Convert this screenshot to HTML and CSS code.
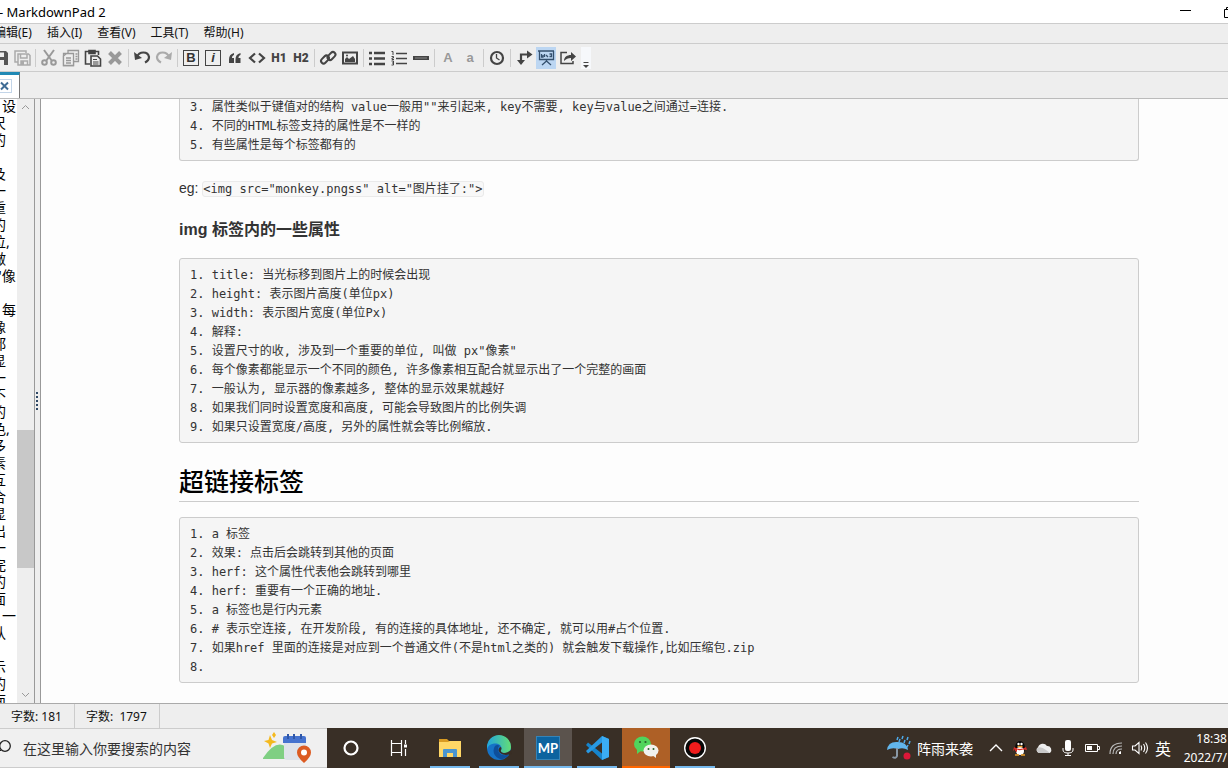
FILE: index.html
```html
<!DOCTYPE html>
<html lang="zh-CN">
<head>
<meta charset="utf-8">
<title>MarkdownPad 2</title>
<link rel="stylesheet" href="styles.css">
</head>
<body>
<div class="window">
  <header class="titlebar">
    <span class="title">- MarkdownPad 2</span>
    <button class="winbtn" aria-label="最小化"><svg width="12" height="12"><path d="M0 4.500H11" stroke="#000"/></svg></button>
    <button class="winbtn max" aria-label="最大化"><svg width="12" height="12"><path d="M.5 3.5H8.500V11.500H.5ZM2.500 3V1.500H10.500V9.500H9" fill="none" stroke="#000"/></svg></button>
  </header>
  <nav class="menu">
    <button>编辑(E)</button><button>插入(I)</button><button>查看(V)</button><button>工具(T)</button><button>帮助(H)</button>
  </nav>
  <div class="toolbar">
    <button aria-label="保存"><svg viewBox="0 0 22 22"><path fill="#555" fill-rule="evenodd" d="M3 4H17L19 6V18H3ZM6 5.500V10H15V5.500ZM7 13V18H15V13Z"/></svg></button>
    <button aria-label="全部保存"><svg viewBox="0 0 22 22"><g fill="none" stroke="#aaa" stroke-width="1.500"><path d="M6.500 15H4V4H15V6M7 7H17.500L19 8.500V18H7ZM9.500 7.500V11H16V7.500M10 18V14H16.500V18"/></g><path d="M10 14h3v4h-3z" fill="#aaa"/></svg></button>
    <i></i>
    <button aria-label="剪切"><svg viewBox="0 0 22 22"><g fill="none" stroke="#999" stroke-width="2"><path d="M6 3L14 14M16 3L8 14"/><circle cx="6.500" cy="15.500" r="2.300"/><circle cx="15.500" cy="15.500" r="2.300"/></g></svg></button>
    <button aria-label="复制"><svg viewBox="0 0 22 22"><g fill="#eee" stroke="#999" stroke-width="1.300"><path d="M8 3.500H18.500V14.500H8ZM6 6.500H3.500V18.500H13.500V15"/><path d="M3.500 9L6.500 6.500H13.500V18.500H3.500ZM6 11h5M6 13.500h5M6 16h5M15.500 7h2M15.500 9.500h2M15.500 12h2"/></g></svg></button>
    <button aria-label="粘贴"><svg viewBox="0 0 22 22"><g fill="none" stroke="#444" stroke-width="1.600"><path d="M8 17H3.500V4.500H16.500V8"/><path d="M7 3.500H13V6.500H7Z" fill="#444"/><path d="M9 9H15.500L18.500 12V19H9Z" fill="#eee"/><path d="M11 12.500h4M11 15h5.500M11 17h5.500" stroke-width="1"/></g></svg></button>
    <button aria-label="删除"><svg viewBox="0 0 22 22"><path d="M5.500 5.500L16.500 16.500M16.500 5.500L5.500 16.500" stroke="#999" stroke-width="4"/></svg></button>
    <i></i>
    <button aria-label="撤销"><svg viewBox="0 0 22 22"><path d="M6 10C8 4 17 4 18 10C18 13 16 14.500 14 15.500" fill="none" stroke="#444" stroke-width="2.200"/><path d="M3 5L4 13L11 11Z" fill="#444"/></svg></button>
    <button aria-label="重做"><svg viewBox="0 0 22 22"><path d="M16 10C14 4 5 4 4 10C4 13 6 14.500 8 15.500" fill="none" stroke="#aaa" stroke-width="2.200"/><path d="M19 5L18 13L11 11Z" fill="#aaa"/></svg></button>
    <i></i>
    <button class="boxed" aria-label="粗体"><b>B</b></button>
    <button class="boxed it" aria-label="斜体"><b>i</b></button>
    <button aria-label="引用"><svg viewBox="0 0 22 22"><g fill="#444"><path d="M10 6C6.500 7 5 9 5 12.500V16H10V11H8C8 9.500 8.500 8.500 10 8Z"/><path d="M16.500 6C13 7 11.500 9 11.500 12.500V16H16.500V11H14.500C14.500 9.500 15 8.500 16.500 8Z"/></g></svg></button>
    <button aria-label="代码"><svg viewBox="0 0 22 22"><path d="M9 6.500L4 11L9 15.500M13 6.500L18 11L13 15.500" fill="none" stroke="#444" stroke-width="2.200"/></svg></button>
    <button class="h">H1</button>
    <button class="h">H2</button>
    <i></i>
    <button aria-label="链接"><svg viewBox="0 0 22 22"><g fill="none" stroke="#444" stroke-width="2"><rect x="3.500" y="10" width="9" height="5" rx="2.500" transform="rotate(-45 8 12.500)"/><rect x="10" y="6.500" width="9" height="5" rx="2.500" transform="rotate(-45 14.500 9)"/></g></svg></button>
    <button aria-label="图片"><svg viewBox="0 0 22 22"><path d="M4 5.500H18V16.500H4Z" fill="none" stroke="#444" stroke-width="2"/><path d="M6 15V12L8 10L10 12L14 9L16 12V15Z" fill="#444"/><circle cx="8" cy="8.500" r="1" fill="#444"/></svg></button>
    <i></i>
    <button aria-label="无序列表"><svg viewBox="0 0 22 22"><path d="M3 6h3M3 11.500h3M3 17h3M8 6h11M8 11.500h11M8 17h11" stroke="#444" stroke-width="2.400"/></svg></button>
    <button aria-label="有序列表"><svg viewBox="0 0 22 22"><path d="M8 6.500h11M8 11.500h11M8 16.500h11" stroke="#444" stroke-width="1.400"/><path d="M3.500 4.500H5V8M3.500 9.500H5.500V11H4V12.500H6M3.500 14H5.500V18H3.500M4 16H5.500" fill="none" stroke="#444"/></svg></button>
    <button aria-label="分隔线"><svg viewBox="0 0 22 22"><path d="M3 9H19V13H3Z" fill="#444"/><path d="M5 11h12" stroke="#888"/></svg></button>
    <i></i>
    <button class="l">A</button>
    <button class="l">a</button>
    <i></i>
    <button aria-label="时间"><svg viewBox="0 0 22 22"><circle cx="11" cy="11" r="6" fill="none" stroke="#444" stroke-width="2.200"/><path d="M10.500 7V11L13.500 13" fill="none" stroke="#444" stroke-width="1.300"/></svg></button>
    <i></i>
    <button aria-label="切换"><svg viewBox="0 0 22 22"><path d="M8 14V7.500H15" fill="none" stroke="#444" stroke-width="2.200"/><path d="M4 13H12L8 18ZM14 3.500L19.500 7.500L14 11.500Z" fill="#444"/></svg></button>
    <button class="on" aria-label="预览"><svg viewBox="0 0 22 22"><g fill="none" stroke="#34506e" stroke-width="1.300"><path d="M3 4H19M4.500 4V12.500H18.500V4M11.500 12.500V15M11.500 14L7 18M11.500 14L16 18M6.500 7V10H8V8M9.500 7V10M11 8L13 10M14.500 7H16.500V9.500H14.500"/></g></svg></button>
    <button aria-label="导出"><svg viewBox="0 0 22 22"><path d="M10 5.500H4V16.500H16V14" fill="none" stroke="#444" stroke-width="1.500"/><path d="M7 14C7 10 10 8 14 8V5L19 9.500L14 14V11C11 11 9 12 7 14Z" fill="#444"/></svg></button>
    <button class="more" aria-label="更多"><svg viewBox="0 0 8 22"><path d="M1.500 15.500H6.500" stroke="#444"/><path d="M1 18H7L4 21Z" fill="#444"/></svg></button>
  </div>
  <div class="tabs"><div class="tab"><button aria-label="关闭"><svg width="11" height="13"><path d="M1 2.500L8 9.500M8 2.500L1 9.500" stroke="#3f6c94" stroke-width="2"/></svg></button></div></div>
  <main class="work">
    <div class="editor">
      <div class="source">
        <p class="in">设</p><p>尺</p><p>的</p><p></p><p>及</p><p>一</p><p>重</p><p>的</p><p>位,</p><p>做</p><p class="in quote">"像</p><p></p><p class="in">每</p><p>像</p><p>都</p><p>显</p><p>一</p><p>不</p><p>的</p><p>色,</p><p>多</p><p>素</p><p>互</p><p>合</p><p>显</p><p>出</p><p>一</p><p>完</p><p>的</p><p>面</p><p class="in">一</p><p>认</p><p></p><p>示</p><p>的</p><p>面</p>
      </div>
      <div class="scroll">
        <svg width="9" height="16"><path d="M1 10L4.500 6.500L8 10" fill="none" stroke="#999"/></svg>
        <div class="track"><div class="thumb"></div></div>
        <svg width="9" height="16"><path d="M1 6L4.500 9.500L8 6" fill="none" stroke="#999"/></svg>
      </div>
    </div>
    <div class="splitter"><span></span></div>
    <article class="preview">
<pre class="first">3. 属性类似于键值对的结构 value一般用""来引起来, key不需要, key与value之间通过=连接.
4. 不同的HTML标签支持的属性是不一样的
5. 有些属性是每个标签都有的</pre>
      <p class="eg">eg: <code>&lt;img src="monkey.pngss" alt="图片挂了:"&gt;</code></p>
      <h3>img 标签内的一些属性</h3>
<pre>1. title: 当光标移到图片上的时候会出现
2. height: 表示图片高度(单位px)
3. width: 表示图片宽度(单位Px)
4. 解释:
5. 设置尺寸的收, 涉及到一个重要的单位, 叫做 px"像素"
6. 每个像素都能显示一个不同的颜色, 许多像素相互配合就显示出了一个完整的画面
7. 一般认为, 显示器的像素越多, 整体的显示效果就越好
8. 如果我们同时设置宽度和高度, 可能会导致图片的比例失调
9. 如果只设置宽度/高度, 另外的属性就会等比例缩放.</pre>
      <h1>超链接标签</h1>
<pre>1. a 标签
2. 效果: 点击后会跳转到其他的页面
3. herf: 这个属性代表他会跳转到哪里
4. herf: 重要有一个正确的地址.
5. a 标签也是行内元素
6. # 表示空连接, 在开发阶段, 有的连接的具体地址, 还不确定, 就可以用#占个位置.
7. 如果href 里面的连接是对应到一个普通文件(不是html之类的) 就会触发下载操作,比如压缩包.zip
8. </pre>
    </article>
  </main>
  <footer class="status"><span>字数: 181</span><span>字数: &nbsp;1797</span></footer>
  <div class="taskbar">
    <label class="search">
      <svg width="12" height="18"><circle cx="5" cy="7" r="5.300" fill="none" stroke="#222" stroke-width="1.300"/><path d="M1 11L-3 15" stroke="#222"/></svg>
      <input type="text" placeholder="在这里输入你要搜索的内容" aria-label="搜索">
      <svg width="50" height="32" viewBox="0 0 50 32"><path d="M0 26Q12 8 22 14V27H0Z" fill="#7fcf83"/><path d="M7 6L9 11L14 13L9 14.500L7 19L5.500 14.500L1 12L5.500 11Z" transform="translate(0 -3)" fill="#f4b91e"/><path d="M11 0l2 3-2 3-2-3z" fill="#f4b91e"/><path d="M21 6H43V28H24Q21 28 21 25Z" fill="#dfe3ea"/><path d="M20 11V6Q20 4 22 4H41Q43 4 43 6V11Z" fill="#4673cf"/><path d="M25 2v5M31 2v5M38 2v5" stroke="#2f57a8" stroke-width="2"/><path d="M41 31Q34 25 34 20.500A7 7 0 0 1 48 20.500Q48 25 41 31Z" fill="#dc5b22"/><circle cx="41" cy="20.500" r="3" fill="#fff"/></svg>
    </label>
    <button aria-label="Cortana"><svg viewBox="0 0 24 24"><circle cx="12" cy="12" r="6.500" fill="none" stroke="#fff" stroke-width="2.200"/></svg></button>
    <button aria-label="任务视图"><svg viewBox="0 0 24 24"><path d="M4.500 4V7.500H14.500V4M4.500 20V16.500H14.500V20M4.500 7.500V16.500M14.500 7.500V16.500M18.500 4V8M18.500 13V20" fill="none" stroke="#fff" stroke-width="1.200"/><path d="M17 8.500h3v3h-3z" fill="#fff"/></svg></button>
    <div class="apps">
      <button class="run" aria-label="文件资源管理器"><svg viewBox="0 0 24 24"><path d="M1 3H9L11 5H23V21H1Z" fill="#d99b22"/><path d="M1 6H10L12 5H23V21H1Z" fill="#ffd766"/><path d="M5 21V14Q5 13 6 13H18Q19 13 19 14V21H15V17H9V21Z" fill="#4a95cf"/></svg></button>
      <button class="run" aria-label="Edge"><svg viewBox="0 0 24 24"><defs><linearGradient id="e"><stop stop-color="#21a5dd"/><stop offset="1" stop-color="#63dd76"/></linearGradient></defs><circle cx="12" cy="12" r="12" fill="#1673c7"/><path d="M0 11A12 12 0 0 1 24 11C24 15 21 17 17 17C14 17 13 15 14.500 13C15 9 11 7 7 7.500C3 8 1 10 0 13Z" fill="url(#e)"/><path d="M7 12C5 18 10 23 15 23.500C19 22 21 20 22 18C16 21 11 18 11 13C11 11 12 10 13 10C10 8 8 9 7 12Z" fill="#0e4f9b"/><path d="M14.500 13C13 15 14 17 17 17C20 17 22 16 23.500 14L25 18L22 18.500C16 20 12 17 11.500 14Q12 11 14 11Z" fill="#392d23"/></svg></button>
      <button class="run active" aria-label="MarkdownPad"><span class="mp">MP</span></button>
      <button class="run" aria-label="VS Code"><svg viewBox="0 0 24 24"><path d="M17 0L24 3V21L17 24L1 9L3 6.500L17 17.500Z" fill="#1684cc"/><path d="M17 0V6.500L3 17.500L1 15Z" fill="#2899e3"/><path d="M17 0L24 3V21L17 24Z" fill="#3badf4"/></svg></button>
      <button class="run alert" aria-label="微信"><svg viewBox="0 0 24 24"><ellipse cx="8.500" cy="9" rx="8.500" ry="7.500" fill="#50d45c"/><path d="M3 14L3 19L8 15Z" fill="#50d45c"/><ellipse cx="17" cy="15.500" rx="7.500" ry="6" fill="#f1f1ee"/><path d="M18 20L22 23L22 18Z" fill="#f1f1ee"/><g fill="#28612c"><circle cx="6" cy="7" r="1.100"/><circle cx="11.500" cy="7" r="1.100"/><circle cx="14.500" cy="14" r="1"/><circle cx="19.500" cy="14" r="1"/></g></svg></button>
      <button class="run" aria-label="录制"><svg viewBox="0 0 24 24"><circle cx="12" cy="12" r="10.300" fill="#080808" stroke="#fff" stroke-width="1.400"/><circle cx="12" cy="12" r="6" fill="#f01c1c"/></svg></button>
    </div>
    <div class="tray">
      <button class="weather"><svg width="26" height="26" viewBox="0 0 26 26"><path d="M12 2l-1 3M17 1l-1 3M22 2l-1 3M19 5l-1 3M24 6l-1 3M14 4l-1 3M22 10l-1 2" stroke="#4eabeb" stroke-width="1.500"/><path d="M1 15Q2 6 12 7Q21 7 22 15Q17 12 12 14Q6 12 1 15Z" fill="#62b6ec"/><path d="M11 13V21Q10 24 6.500 22" fill="none" stroke="#8998a5" stroke-width="2"/><circle cx="21" cy="21" r="3.500" fill="#dc1738"/></svg>阵雨来袭</button>
      <button aria-label="显示隐藏的图标"><svg viewBox="0 0 16 16"><path d="M2 11L8 5L14 11" fill="none" stroke="#fff" stroke-width="1.400"/></svg></button>
      <button aria-label="QQ"><svg viewBox="0 0 16 16"><ellipse cx="8" cy="8" rx="5" ry="7" fill="#080808"/><ellipse cx="8" cy="11" rx="4" ry="4" fill="#fff"/><path d="M2 7Q8 11 14 7L15 10L11 9.500Q7 11 5 9.500L5 12L3 11V9L1 11Z" fill="#d92d26"/><circle cx="6.500" cy="4" r="1.200" fill="#fff"/><circle cx="9.500" cy="4" r="1.200" fill="#fff"/><path d="M5.500 6.500h5M3 15h4M9 15h4" stroke="#eea12a" stroke-width="1.500"/></svg></button>
      <button aria-label="OneDrive"><svg viewBox="0 0 16 16"><path d="M3 13A3 3 0 0 1 2 7.500A5 5 0 0 1 11 6A4 4 0 0 1 14 13Z" fill="#eee"/><path d="M1 8Q5 6 10 10L14 13H3Q0 12 1 8Z" fill="#c9c9c9"/></svg></button>
      <button aria-label="麦克风"><svg viewBox="0 0 16 16"><rect x="5" y="0" width="6" height="11" rx="2" fill="#fff"/><path d="M3 8V10Q3 13 8 13Q13 13 13 10V8M8 13V15.500M5 15.500H11" fill="none" stroke="#fff"/></svg></button>
      <button aria-label="电池"><svg viewBox="0 0 16 16"><path d="M1.500 4.500H13.500V11.500H1.500ZM14 6.500H15.500V9.500H14" fill="none" stroke="#fff"/><path d="M3 6h5v4H3z" fill="#fff"/></svg></button>
      <button aria-label="网络"><svg viewBox="0 0 16 16"><g fill="none" stroke="#bbb" stroke-width="1.200"><path d="M2 14Q2 3 14 3M5 14Q5 6 14 6M8 14Q8 9 14 9"/></g><path d="M11 14V12L13 11V14Z" fill="#fff"/></svg></button>
      <button aria-label="音量"><svg viewBox="0 0 16 16"><path d="M.5 6H3L7 2.500V13.500L3 10H.5ZM9 5.500Q10.500 8 9 10.500M11.500 4Q14 8 11.500 12M13.500 2.500Q17.500 8 13.500 13.500" fill="none" stroke="#fff" stroke-width="1.100"/></svg></button>
      <button class="ime">英</button>
      <div class="clock"><span>18:38</span><span>2022/7/</span></div>
    </div>
  </div>
</div>
</body>
</html>
```
FILE: styles.css
```css
* { box-sizing: border-box; }
body { margin: 0; font: 12px/16px "Noto Sans", "Noto Sans CJK SC", sans-serif; color: #111; background: #eee; }
button { border: 0; padding: 0; margin: 0; background: none; font: inherit; color: inherit; }
svg { display: block; flex: none; overflow: visible; }
.window { height: 100vh; display: flex; flex-direction: column; overflow: hidden; }

.titlebar { flex: none; height: 24px; display: flex; align-items: center; background: #fff; border-bottom: 1px solid #ccc; overflow: hidden; }
.title { flex: 1; white-space: pre; margin-left: -1px; font-size: 13px; line-height: 22px; color: #000; }
.winbtn { width: 44px; flex: none; }
.winbtn.max { width: 4px; }
.menu { flex: none; height: 20px; display: flex; align-items: center; gap: 15px; padding-bottom: 1px; margin-left: -6px; border-bottom: 1px solid #ccc; }

.toolbar { flex: none; height: 28px; display: flex; align-items: center; margin-left: -11px; border-bottom: 1px solid #ccc; }
.toolbar button { width: 22px; height: 22px; flex: none; display: flex; align-items: center; justify-content: center; }
.toolbar svg { width: 22px; height: 22px; }
.toolbar i { width: 1px; height: 18px; margin: 0 2px; background: #ccc; flex: none; }
.boxed b { width: 16px; height: 16px; border: 1px solid #444; font: bold 13px/14px "Liberation Sans", sans-serif; color: #333; text-align: center; }
.it b { font: italic bold 13px/14px "Liberation Sans", sans-serif; }
.toolbar .h { font: 900 12px/16px Roboto, sans-serif; color: #444; }
.toolbar .l { font: bold 13px/16px "Liberation Sans", sans-serif; color: #999; }
.toolbar .on { width: 20px; margin: 0 1px; background: #bcd6f2; }
.toolbar .more { width: 10px; margin-left: 2px; background: #f6f8fb; }
.toolbar .more svg { width: 8px; }

.tabs { flex: none; height: 27px; border-bottom: 1px solid #bbb; display: flex; }
.tab { width: 20px; background: #fff; border-top: 3px solid #2089b5; border-right: 1px solid #777; display: flex; align-items: center; }
.tab button { width: 12px; height: 14px; margin-bottom: 2px; border: 1px solid #c3d5e8; border-left: 0; }

.work { flex: 1; min-height: 0; display: flex; background: #fdfdfd; }
.editor { flex: none; width: 34px; display: flex; overflow: hidden; background: #fff; }
.source { flex: none; width: 17px; overflow: hidden; margin-top: -2px; font-size: 14px; line-height: 17px; color: #000; }
.source p { margin: 0 0 0 -8px; height: 17px; white-space: nowrap; }
.source .in { margin-left: 2px; }
.source .quote { margin-left: -4px; }
.scroll { width: 17px; background: #eee; display: flex; flex-direction: column; align-items: center; }
.track { flex: 1; width: 100%; display: flex; flex-direction: column; }
.track::before { content: ""; flex: 315; }
.track::after { content: ""; flex: 119; }
.thumb { flex: 138; background: #c8c8c8; }
.splitter { flex: none; width: 7px; border: solid #999; border-width: 0 1px; background: #eee; display: flex; align-items: center; justify-content: center; }
.splitter span { width: 2px; height: 19px; margin-right: 1px; background: repeating-linear-gradient(#2f4866 0 2px, #eee 2px 4px); }

.preview { flex: 1; min-width: 0; overflow: hidden; padding: 0 89px 0 138px; color: #333; }
pre { margin: 0; padding: 7px 10px 5px; border: 1px solid #ccc; border-radius: 3px; background: #f5f5f5; overflow: hidden; }
pre, code { font: 12px/19px "DejaVu Sans Mono", "Noto Sans CJK SC", monospace; color: #333; }
.first { border-top: 0; border-radius: 0 0 3px 3px; margin-top: -1px; padding-top: 0; }
.eg { margin: 16px 0; font: 14px/22px "Liberation Sans", sans-serif; }
code { display: inline-block; line-height: 14px; border: 1px solid #eaeaea; border-radius: 3px; background: #f8f8f8; }
h3 { margin: 18px 0 15px; font: bold 16px/26px "Liberation Sans", "Noto Sans CJK SC", sans-serif; }
h1 { margin: 20px 0 15px; padding-bottom: 3px; border-bottom: 1px solid #ccc; font: 500 25px/35px "Noto Sans CJK SC", sans-serif; color: #000; }

.status { flex: none; height: 25px; border-top: 1px solid #aaa; display: flex; }
.status span { padding: 0 12px 0 11px; line-height: 25px; border-right: 1px solid #ccc; white-space: nowrap; }

.taskbar { flex: none; height: 40px; display: flex; background: #392f26; color: #fff; }
.search { width: 327px; flex: none; display: flex; align-items: center; background: #f0f0f0; border: solid #ccc; border-width: 1px 0; padding-right: 14px; }
.search input { flex: 1; min-width: 0; margin-left: 11px; padding: 0; border: 0; background: none; font: 14px/20px "Noto Sans CJK SC", sans-serif; color: #333; }
.search input::placeholder { color: #333; opacity: 1; }
.taskbar button { flex: none; width: 48px; display: flex; align-items: center; justify-content: center; }
.taskbar button svg { width: 24px; height: 24px; }
.apps { display: flex; gap: 1px; margin-left: 3px; }
.apps .run { background: linear-gradient(#76b9ed, #76b9ed) center bottom / 40px 2px no-repeat; }
.apps .active { background-color: #5b534d; background-size: 48px 2px; }
.apps .alert { background: #ae6026; border-bottom: 2px solid #f60; }
.mp { width: 24px; height: 24px; background: #0c639f; border: 1px solid #3483b7; font: bold 13px/22px Lato, sans-serif; }
.tray { margin-left: auto; display: flex; }
.tray button { width: 24px; }
.tray button svg { width: 16px; height: 16px; }
.taskbar .weather { width: auto; gap: 5px; margin-right: 11px; font: 14px/20px "Noto Sans CJK SC", sans-serif; }
.tray .weather svg { width: 26px; height: 26px; }
.taskbar .ime { width: 22px; margin-right: 7px; font: 16px/20px "Noto Sans CJK SC", sans-serif; }
.clock { width: 46px; margin-right: 1px; display: flex; flex-direction: column; align-items: flex-end; justify-content: center; line-height: 19px; white-space: nowrap; }
```
